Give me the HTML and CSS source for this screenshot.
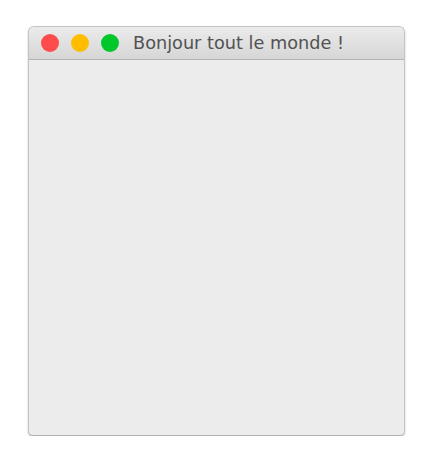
FILE: index.html
```html
<!DOCTYPE html>
<html lang="fr">
  <head>
    <meta charset="UTF-8" />
    <title>Bonjour tout le monde !</title>
    <link rel="stylesheet" href="styles.css">
  </head>
  <body>
    <div class="window">
      <div class="titlebar">
        <div class="lights">
          <span class="light close"></span>
          <span class="light minimize"></span>
          <span class="light zoom"></span>
        </div>
        <div class="title">Bonjour tout le monde !</div>
      </div>
      <div class="content"></div>
    </div>
  </body>
</html>
```

FILE: styles.css
```css
body {
  margin: 0;
  padding: 0;
  background: #fff;
  font-family: "DejaVu Sans", sans-serif;
}

.window {
  margin: 26px 0 0 28px;
  width: 377px;
  height: 410px;
  box-sizing: border-box;
  display: flex;
  flex-direction: column;
  border: 1px solid #c4c4c4;
  border-bottom-color: #b0b0b0;
  border-radius: 6px 6px 5px 5px;
  background-color: #ececec;
  box-shadow: 0 1px 2px rgba(0, 0, 0, 0.25);
  overflow: hidden;
}

.titlebar {
  height: 33px;
  box-sizing: border-box;
  display: flex;
  align-items: center;
  padding-left: 12px;
  background: linear-gradient(#ebebeb, #d6d6d6);
  border-bottom: 1px solid #b4b4b4;
}

.lights {
  display: flex;
  gap: 12px;
}

.light {
  width: 18px;
  height: 18px;
  border-radius: 50%;
}

.close {
  background-color: #fe4b4b;
}

.minimize {
  background-color: #ffbd00;
}

.zoom {
  background-color: #00c82a;
}

.title {
  margin-left: 14px;
  font-size: 17.7px;
  color: #525252;
}

.content {
  flex: 1;
}
```
